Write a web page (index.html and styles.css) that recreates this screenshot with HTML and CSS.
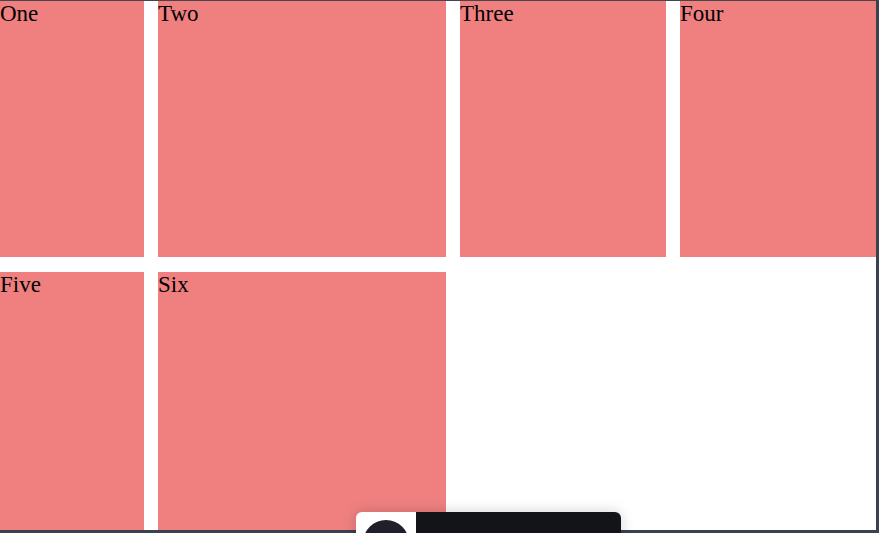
FILE: index.html
```html
<!DOCTYPE html>
<html>
<head>
<meta charset="utf-8">
<link rel="stylesheet" href="styles.css">
</head>
<body>
<div class="screen">
  <div class="viewport">
    <div class="grid">
      <div class="cell">One</div>
      <div class="cell">Two</div>
      <div class="cell">Three</div>
      <div class="cell">Four</div>
      <div class="cell">Five</div>
      <div class="cell">Six</div>
    </div>
  </div>
  <div class="dock">
    <div class="dock-left"><span class="avatar"></span></div>
    <div class="dock-right"></div>
  </div>
</div>
</body>
</html>
```
FILE: styles.css
```css
html, body {
  margin: 0;
  padding: 0;
  width: 879px;
  height: 533px;
  overflow: hidden;
  background: #3b4150;
}
.screen {
  position: relative;
  width: 879px;
  height: 533px;
  background: #3b4150;
  border-top: 1px solid #45464c;
  box-sizing: border-box;
  overflow: hidden;
}
.viewport {
  width: 876px;
  height: 529px;
  background: #ffffff;
  overflow: hidden;
}
.grid {
  display: grid;
  grid-template-columns: 144px 288px 206px 196px;
  grid-template-rows: 256px 258px;
  column-gap: 14px;
  row-gap: 15px;
}
.cell {
  background: #f08080;
  font-family: "Liberation Serif", "Times New Roman", serif;
  font-size: 23px;
  line-height: 26px;
  color: #000;
}
.dock {
  position: absolute;
  left: 356px;
  top: 511px;
  width: 265px;
  height: 40px;
  display: flex;
  border-radius: 6px 6px 0 0;
  overflow: hidden;
  box-shadow: 0 0 14px rgba(0, 0, 0, 0.18);
}
.dock-left {
  width: 60px;
  background: #ffffff;
  position: relative;
}
.avatar {
  position: absolute;
  left: 7px;
  top: 8px;
  width: 46px;
  height: 46px;
  border-radius: 50%;
  background: #1f2029;
}
.dock-right {
  flex: 1;
  background: #131418;
}
```
